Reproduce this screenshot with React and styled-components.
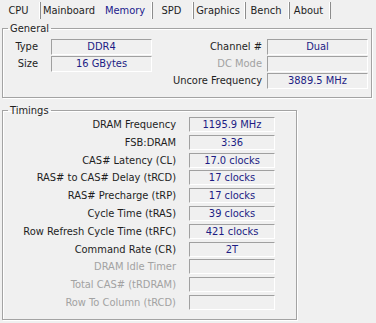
import React from "react";
import styled, { createGlobalStyle } from "styled-components";

const Global = createGlobalStyle`
  html, body { margin: 0; padding: 0; background: #f0f0f0; overflow: hidden; }
  body { font-family: "DejaVu Sans Condensed", "DejaVu Sans", sans-serif; font-size: 11px; color: #111; }
`;

const Window = styled.div`
  width: 376px;
  height: 323px;
  background: #f0f0f0;
  display: flex;
  flex-direction: column;
`;

const TabBar = styled.div`
  display: flex;
  height: 20px;
  align-items: flex-start;
`;

const Tab = styled.div`
  box-sizing: border-box;
  width: ${(p) => p.$w}px;
  height: 17px;
  margin-top: 2px;
  display: flex;
  align-items: center;
  justify-content: center;
  padding-right: 3px;
  line-height: 13px;
  color: ${(p) => (p.$active ? "#1a1a8c" : "#1e1e1e")};
  border-right: 1px solid ${(p) => (p.$sep ? "#8c8c8c" : "transparent")};
  box-shadow: ${(p) => (p.$sep ? "inset -1px 0 0 #ffffff" : "none")};
`;

const Group = styled.fieldset`
  box-sizing: border-box;
  margin: ${(p) => p.$mt}px 0 0 2px;
  width: ${(p) => p.$w}px;
  padding: ${(p) => p.$pad};
  border: 1px solid #a3a3a3;
  box-shadow: 1px 1px 0 #ffffff, inset 1px 1px 0 #ffffff;
  min-width: 0;
`;

const Legend = styled.legend`
  margin-left: 5px;
  padding: 0 2px;
  line-height: 13px;
  color: #1e1e1e;
`;

const GeneralGrid = styled.div`
  display: grid;
  grid-template-columns: 48px 101px 1fr 101px;
  grid-auto-rows: 16px;
  row-gap: 1px;
`;

const TimingGrid = styled.div`
  display: grid;
  grid-template-columns: 186px 86px;
  grid-auto-rows: 15px;
  row-gap: 2.8px;
`;

const Label = styled.div`
  text-align: right;
  padding-right: ${(p) => p.$pr}px;
  line-height: ${(p) => p.$lh}px;
  white-space: nowrap;
  color: ${(p) => (p.$disabled ? "#a2a2a2" : "#1e1e1e")};
`;

const Value = styled.div`
  box-sizing: border-box;
  border-top: 1px solid #a0a0a0;
  border-left: 1px solid #a0a0a0;
  border-right: 1px solid #ffffff;
  border-bottom: 1px solid #ffffff;
  text-align: center;
  color: #1c1c84;
  line-height: ${(p) => p.$lh}px;
  white-space: nowrap;
`;

const Blank = styled.div``;

const tabs = [
  { name: "CPU", w: 41, sep: true },
  { name: "Mainboard", w: 60, sep: false },
  { name: "Memory", w: 52, sep: true, active: true },
  { name: "SPD", w: 41, sep: true },
  { name: "Graphics", w: 52, sep: true },
  { name: "Bench", w: 44, sep: true },
  { name: "About", w: 41, sep: true },
];

const timings = [
  ["DRAM Frequency", "1195.9 MHz"],
  ["FSB:DRAM", "3:36"],
  ["CAS# Latency (CL)", "17.0 clocks"],
  ["RAS# to CAS# Delay (tRCD)", "17 clocks"],
  ["RAS# Precharge (tRP)", "17 clocks"],
  ["Cycle Time (tRAS)", "39 clocks"],
  ["Row Refresh Cycle Time (tRFC)", "421 clocks"],
  ["Command Rate (CR)", "2T"],
  ["DRAM Idle Timer", null],
  ["Total CAS# (tRDRAM)", null],
  ["Row To Column (tRCD)", null],
];

export default function App() {
  return (
    <>
      <Global />
      <Window>
        <TabBar>
          {tabs.map((t) => (
            <Tab key={t.name} $w={t.w} $sep={t.sep} $active={t.active}>
              {t.name}
            </Tab>
          ))}
        </TabBar>
        <Group $mt={2} $w={370} $pad="4px 3px 8px 0">
          <Legend>General</Legend>
          <GeneralGrid>
            <Label $pr={13} $lh={16}>Type</Label>
            <Value $lh={14}>DDR4</Value>
            <Label $pr={5} $lh={16}>Channel #</Label>
            <Value $lh={14}>Dual</Value>
            <Label $pr={13} $lh={16}>Size</Label>
            <Value $lh={14}>16 GBytes</Value>
            <Label $pr={5} $lh={16} $disabled>DC Mode</Label>
            <Value $lh={14} />
            <Blank />
            <Blank />
            <Label $pr={5} $lh={16}>Uncore Frequency</Label>
            <Value $lh={14}>3889.5 MHz</Value>
          </GeneralGrid>
        </Group>
        <Group $mt={6} $w={295} $pad="0 21px 9px 0">
          <Legend>Timings</Legend>
          <TimingGrid>
            {timings.map(([label, value]) => (
              <React.Fragment key={label}>
                <Label $pr={13} $lh={15} $disabled={value === null}>
                  {label}
                </Label>
                <Value $lh={13}>{value}</Value>
              </React.Fragment>
            ))}
          </TimingGrid>
        </Group>
      </Window>
    </>
  );
}
